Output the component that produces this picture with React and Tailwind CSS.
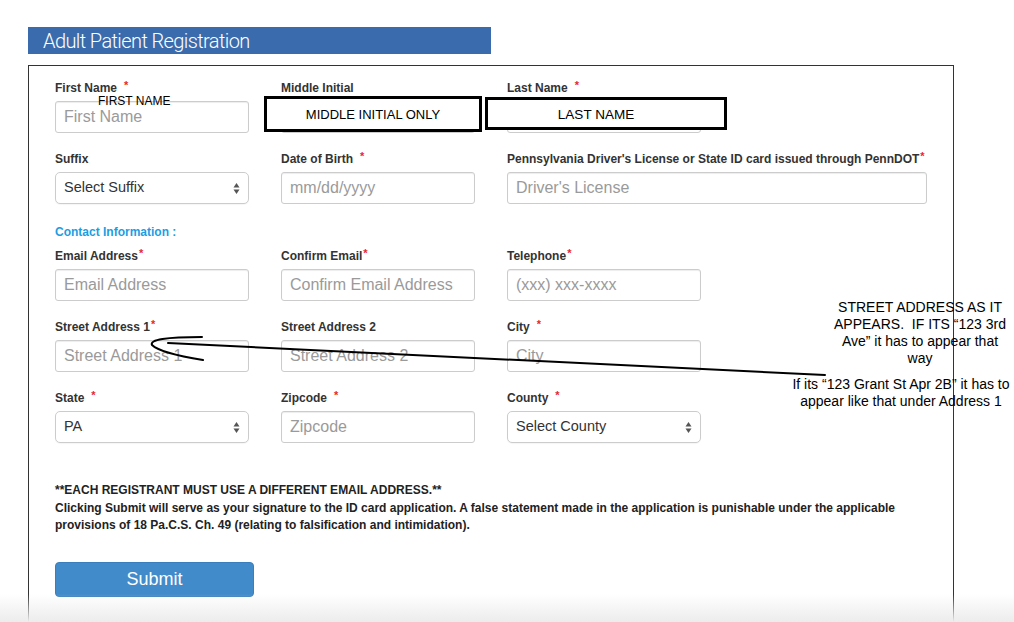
import React from 'react'

const font = { fontFamily: '"Liberation Sans", Arial, sans-serif' }

function Star({ space = false }) {
  return (
    <span className={`text-[#e8282d] text-[11px] align-top relative -top-[3px] ${space ? 'ml-[7px]' : 'ml-[1px]'}`}>*</span>
  )
}

function Label({ children, star, space }) {
  return (
    <div className="h-[17px] leading-[17px] text-[12px] font-bold text-[#333] whitespace-nowrap">
      {children}
      {star && <Star space={space} />}
    </div>
  )
}

function TextInput({ placeholder, wide = false }) {
  return (
    <input
      placeholder={placeholder}
      className={`${wide ? 'w-[420px]' : 'w-[194px]'} h-[32px] mt-[4px] block border border-[#cccccc] rounded-[3px] pl-[8px] text-[16px] text-[#555] placeholder:text-[#9a9a9a] shadow-[inset_0_1px_1px_rgba(0,0,0,0.075)] outline-none bg-white`}
      style={font}
    />
  )
}

function SelectBox({ value }) {
  return (
    <div className="w-[194px] h-[32px] mt-[4px] border border-[#cccccc] rounded-[5px] bg-white flex items-center justify-between pl-[8px] pr-[8px] shadow-[0_1px_1px_rgba(0,0,0,0.04)]">
      <span className="text-[14.5px] text-[#333]">{value}</span>
      <svg width="7" height="13" viewBox="0 0 7 13">
        <path d="M3.5 1 L6.5 5.5 L0.5 5.5 Z" fill="#555" />
        <path d="M3.5 12 L6.5 7.5 L0.5 7.5 Z" fill="#555" />
      </svg>
    </div>
  )
}

function Field({ label, star, space, children }) {
  return (
    <div>
      <Label star={star} space={space}>{label}</Label>
      {children}
    </div>
  )
}

export default function App() {
  return (
    <div className="relative w-[1014px] h-[622px] overflow-hidden bg-white" style={font}>
      <div className="pt-[27px] pl-[28px]">
        {/* Title bar */}
        <div className="w-[463px] h-[27px] bg-[#3a6cad] flex items-center pl-[15px]">
          <span className="text-white text-[20px] font-light tracking-[-0.6px]" style={{ fontFamily: 'Roboto, "Liberation Sans", sans-serif' }}>
            Adult Patient Registration
          </span>
        </div>

        {/* Form box */}
        <div className="mt-[11px] w-[926px] h-[600px] border border-[#333] pt-[14px] pl-[26px]">
          <div className="grid grid-cols-[194px_194px_420px] gap-x-8 gap-y-[18px]">
            <Field label="First Name" star space><TextInput placeholder="First Name" /></Field>
            <Field label="Middle Initial"><TextInput placeholder="Middle Initial" /></Field>
            <Field label="Last Name" star space><TextInput placeholder="Last Name" /></Field>

            <Field label="Suffix"><SelectBox value="Select Suffix" /></Field>
            <Field label="Date of Birth" star space><TextInput placeholder="mm/dd/yyyy" /></Field>
            <Field label="Pennsylvania Driver's License or State ID card issued through PennDOT" star>
              <TextInput placeholder="Driver's License" wide />
            </Field>
          </div>

          <div className="mt-[20px] mb-[7px] h-[17px] leading-[17px] text-[12px] font-bold text-[#1c9de3]">
            Contact Information :
          </div>

          <div className="grid grid-cols-[194px_194px_194px] gap-x-8 gap-y-[18px]">
            <Field label="Email Address" star><TextInput placeholder="Email Address" /></Field>
            <Field label="Confirm Email" star><TextInput placeholder="Confirm Email Address" /></Field>
            <Field label="Telephone" star><TextInput placeholder="(xxx) xxx-xxxx" /></Field>

            <Field label="Street Address 1" star><TextInput placeholder="Street Address 1" /></Field>
            <Field label="Street Address 2"><TextInput placeholder="Street Address 2" /></Field>
            <Field label="City" star space><TextInput placeholder="City" /></Field>

            <Field label="State" star space><SelectBox value="PA" /></Field>
            <Field label="Zipcode" star space><TextInput placeholder="Zipcode" /></Field>
            <Field label="County" star space><SelectBox value="Select County" /></Field>
          </div>

          <div className="mt-[39px] text-[12px] font-bold leading-[17.5px] text-[#222]">
            <div>**EACH REGISTRANT MUST USE A DIFFERENT EMAIL ADDRESS.**</div>
            <div>Clicking Submit will serve as your signature to the ID card application. A false statement made in the application is punishable under the applicable</div>
            <div>provisions of 18 Pa.C.S. Ch. 49 (relating to falsification and intimidation).</div>
          </div>

          <button className="mt-[27px] w-[199px] h-[35px] bg-[#428bca] border border-[#3a7fbd] rounded-[4px] text-white text-[18px]">
            Submit
          </button>
        </div>
      </div>

      {/* Annotations drawn over the form */}
      <div className="absolute left-[98px] top-[94px] text-[12px] leading-[14px] text-black">FIRST NAME</div>
      <div className="absolute left-[264px] top-[96px] w-[218px] h-[36px] border-[3px] border-black bg-white flex items-center justify-center pt-[1px] text-[13px] text-black">
        MIDDLE INITIAL ONLY
      </div>
      <div className="absolute left-[485px] top-[97px] w-[242px] h-[33px] border-[3px] border-black bg-white flex items-center justify-center pr-[20px] pt-[3px] text-[13.5px] text-black">
        LAST NAME
      </div>

      <div className="absolute left-[820px] top-[299px] w-[200px] text-center text-[14px] leading-[17px] text-black">
        STREET ADDRESS AS IT<br />APPEARS.&nbsp; IF ITS “123 3rd<br />Ave” it has to appear that<br />way
      </div>
      <div className="absolute left-[781px] top-[376px] w-[240px] text-center text-[14px] leading-[17px] text-black">
        If its “123 Grant St Apr 2B” it has to<br />appear like that under Address 1
      </div>

      <svg className="absolute left-0 top-0 pointer-events-none" width="1014" height="622">
        <path d="M202 337 Q148 337 152 345 Q160 353 203 360" fill="none" stroke="#000" strokeWidth="2" strokeLinecap="round" />
        <path d="M168 343 L825 375" fill="none" stroke="#000" strokeWidth="2" strokeLinecap="round" />
      </svg>

      <div className="absolute left-0 bottom-0 w-full h-[28px] bg-gradient-to-b from-transparent to-[#ececec] pointer-events-none" />
    </div>
  )
}
